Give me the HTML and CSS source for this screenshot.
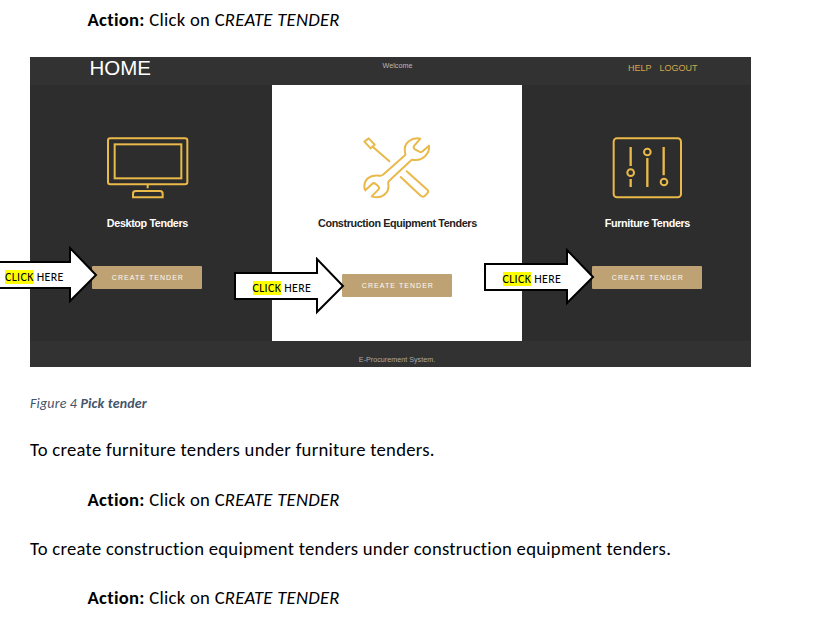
FILE: index.html
```html
<!DOCTYPE html>
<html lang="en">
<head>
<meta charset="utf-8">
<title>Pick tender</title>
<link rel="stylesheet" href="styles.css">
</head>
<body>
<main class="doc">
  <p class="action"><b>Action:</b> <span class="rest">Click on C<i>REATE TENDER</i></span></p>
  <figure class="figure">
    <div class="app">
      <header class="top">
        <span class="home">HOME</span>
        <span class="welcome">Welcome</span>
        <nav class="links"><span>HELP</span><span>LOGOUT</span></nav>
      </header>
      <div class="cols">
        <section class="col">
          <svg class="icon" viewBox="63 30 216 198" fill="none" stroke="#e9b949" stroke-width="6">
            <rect x="54" y="40" width="238" height="138" rx="7"/>
            <rect x="74" y="58" width="200" height="102"/>
            <path d="M173 178V190M129 217V206Q129 198 137 198H210Q218 198 218 206V217Z"/>
          </svg>
          <h2 class="name name-desktop">Desktop Tenders</h2>
          <span class="btn">CREATE TENDER</span>
        </section>
        <section class="col light">
          <svg class="icon" viewBox="156 30 216 198" fill="none" stroke="#e9b949" stroke-width="6" stroke-linejoin="round" stroke-linecap="round">
            <path d="M166 50L179 40L197 59L185 70ZM191 65L241 109M293 139L355 194Q360 199 355 205L347 213Q341 218 335 212L275 156"/>
            <path d="M334 41C308 36 283 54 288 80Q290 87 288 91L222 149Q217 154 211 152C187 149 166 160 166 185Q166 191 169 196L189 177Q194 172 200 177L208 184Q213 189 208 194L188 214C217 224 242 204 238 178Q236 172 240 168L304 108Q309 103 315 105C340 108 363 87 360 62L341 79Q335 84 329 79L318 73Q311 68 316 62Z"/>
          </svg>
          <h2 class="name name-construction">Construction Equipment Tenders</h2>
          <span class="btn">CREATE TENDER</span>
        </section>
        <section class="col">
          <svg class="icon" viewBox="63 30 216 198" fill="none" stroke="#e9b949" stroke-width="6">
            <rect x="71" y="40" width="202" height="177" rx="10"/>
            <path d="M122 66V123M122 162V186M172 99V186M221 66V151" stroke-width="7"/>
            <circle cx="122" cy="143" r="10"/><circle cx="172" cy="81" r="10"/><circle cx="222" cy="171" r="10"/>
          </svg>
          <h2 class="name name-furniture">Furniture Tenders</h2>
          <span class="btn">CREATE TENDER</span>
        </section>
      </div>
      <footer class="foot">E-Procurement System.</footer>
    </div>
    <div class="callout callout-a">
      <svg viewBox="0 0 112 58"><path d="M2 16H84V2L110 29L84 55V42H2Z"/></svg>
      <span><mark>CLICK</mark> HERE</span>
    </div>
    <div class="callout callout-b">
      <svg viewBox="0 0 112 58"><path d="M2 16H84V2L110 29L84 55V42H2Z"/></svg>
      <span><mark>CLICK</mark> HERE</span>
    </div>
    <div class="callout callout-c">
      <svg viewBox="0 0 112 58"><path d="M2 16H84V2L110 29L84 55V42H2Z"/></svg>
      <span><mark>CLICK</mark> HERE</span>
    </div>
  </figure>
  <p class="caption">Figure 4 <b>Pick tender</b></p>
  <p class="para para-short">To create furniture tenders under furniture tenders.</p>
  <p class="action"><b>Action:</b> <span class="rest">Click on C<i>REATE TENDER</i></span></p>
  <p class="para">To create construction equipment tenders under construction equipment tenders.</p>
  <p class="action"><b>Action:</b> <span class="rest">Click on C<i>REATE TENDER</i></span></p>
</main>
</body>
</html>
```

FILE: styles.css
```css
* { box-sizing: border-box; }
body {
  margin: 0;
  background: #fff;
  color: #000;
  font-family: Carlito, Lato, "Liberation Sans", sans-serif;
  overflow: hidden;
}
.doc { padding: 7px 0 0 30px; }
p, figure, h2 { margin: 0; }
.action, .para {
  font-size: 18.67px;
  letter-spacing: 0.27px;
  line-height: 25px;
  height: 24px;
  margin-bottom: 25px;
  white-space: nowrap;
}
.action { padding-left: 57.5px; }
.action:first-child, .para-short { margin-bottom: 26px; }
.figure { position: relative; width: 721px; height: 310px; }
.app {
  height: 310px;
  overflow: hidden;
  background: #323232;
  font-family: "Liberation Sans", Arial, sans-serif;
}
.top {
  display: grid;
  grid-template-columns: 250px 235px 1fr;
  height: 28px;
  color: #fff;
}
.home { padding-left: 59.5px; font-size: 20.5px; line-height: 22px; }
.welcome { text-align: center; font-size: 7.2px; line-height: 18px; color: #bbb; }
.links {
  display: flex;
  gap: 8px;
  padding-left: 113px;
  font-size: 9px;
  line-height: 22px;
  color: #d2a84c;
}
.cols {
  display: grid;
  grid-template-columns: 250px 250px 250px;
  width: 750px;
  height: 256px;
  margin-left: -7.6px;
  background: #2d2d2d;
}
.col {
  display: flex;
  flex-direction: column;
  align-items: center;
  padding-top: 50px;
  color: #fff;
}
.light { background: #fff; color: #222; }
.icon { width: 72px; height: 66px; overflow: visible; }
.name {
  margin-top: 14px;
  font-size: 10.8px;
  letter-spacing: -0.38px;
  line-height: 16px;
  white-space: nowrap;
}
.btn {
  width: 110px;
  height: 22.5px;
  margin-top: 35px;
  padding-left: 1px;
  border-radius: 1px;
  background: #bfa273;
  color: #fff9ee;
  font-size: 7px;
  line-height: 23px;
  letter-spacing: 1.05px;
  text-align: center;
}
.light .btn { margin-top: 43px; }
.foot {
  width: 734px;
  padding-top: 11px;
  text-align: center;
  font-size: 7.2px;
  line-height: 16px;
  color: #aaa;
}
.callout { position: absolute; width: 112px; height: 58px; }
.callout svg { display: block; width: 112px; height: 58px; }
.callout path { fill: #fff; stroke: #000; stroke-width: 2; }
.callout span {
  position: absolute;
  left: 19.5px;
  top: 24px;
  font-size: 12px;
  letter-spacing: 0.32px;
  line-height: 15px;
  white-space: nowrap;
}
.callout mark {
  background: linear-gradient(#ff0, #ff0) 0 0 / 100% 14px no-repeat;
  color: #000;
}
.callout-a { left: -44.5px; top: 188.5px; }
.callout-b { left: 203px; top: 199.5px; }
.callout-c { left: 453px; top: 190.5px; }
.caption {
  margin: 27px 0 25px;
  height: 18px;
  font-size: 14px;
  letter-spacing: 0.16px;
  line-height: 19px;
  font-style: italic;
  color: #44546a;
}
```
